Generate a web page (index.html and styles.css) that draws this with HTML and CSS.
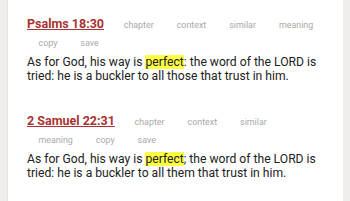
FILE: index.html
```html
<!DOCTYPE html>
<html>
<head>
<meta charset="utf-8">
<link rel="stylesheet" href="styles.css">
</head>
<body>
<div class="page">
  <div class="entry">
    <div class="head">
      <a class="ref" href="#">Psalms 18:30</a>
      <a class="act" href="#">chapter</a><a class="act" href="#">context</a><a class="act" href="#">similar</a><a class="act" href="#">meaning</a><a class="act" href="#">copy</a><a class="act" href="#">save</a>
    </div>
    <p class="verse">As for God, his way is <mark>perfect</mark>: the word of the LORD is tried: he is a buckler to all those that trust in him.</p>
  </div>
  <div class="entry">
    <div class="head">
      <a class="ref" href="#">2 Samuel 22:31</a>
      <a class="act" href="#">chapter</a><a class="act" href="#">context</a><a class="act" href="#">similar</a><a class="act" href="#">meaning</a><a class="act" href="#">copy</a><a class="act" href="#">save</a>
    </div>
    <p class="verse">As for God, his way is <mark>perfect</mark>; the word of the LORD is tried: he is a buckler to all them that trust in him.</p>
  </div>
</div>
</body>
</html>
```
FILE: styles.css
```css
html, body {
  margin: 0;
  padding: 0;
  background: #efeeea;
  height: 100%;
}
body {
  font-family: Roboto, "Liberation Sans", sans-serif;
}
.page {
  background: #ffffff;
  margin: 0 7px;
  min-height: 100%;
  padding: 15px 14px 0 19px;
  box-sizing: border-box;
  border-left: 1px solid #e6e4e0;
}
.entry {
  margin-bottom: 28px;
}
.head {
  line-height: 18px;
  font-size: 8.9px;
}
.ref {
  font-size: 12.5px;
  font-weight: bold;
  color: #a93232;
  text-decoration: underline;
  margin-right: 6px;
}
.act {
  color: #a9a9a9;
  text-decoration: none;
  padding: 0 11.5px;
  display: inline-block;
}
.verse {
  margin: 3px 0 0 0;
  font-size: 12.15px;
  line-height: 14.3px;
  color: #222;
}
mark {
  background: #ffff44;
  color: #222;
}
```
